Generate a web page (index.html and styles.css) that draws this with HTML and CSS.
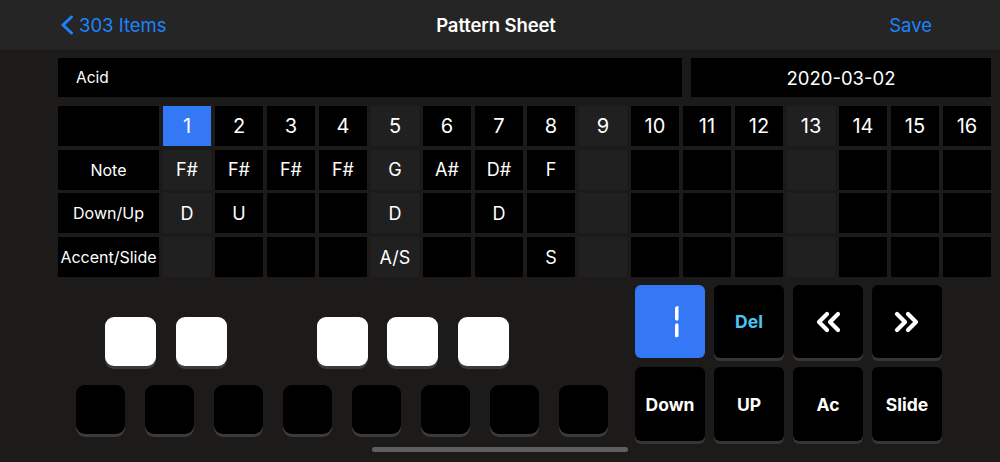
FILE: index.html
```html
<!DOCTYPE html>
<html>
<head>
<meta charset="utf-8">
<link rel="stylesheet" href="styles.css">
</head>
<body>
<header class="nav">
  <div class="nav-left">
    <svg class="chev" width="14" height="20" viewBox="0 0 14 20"><polyline points="11.5,2 3,10 11.5,18" fill="none" stroke="#1a84ff" stroke-width="3" stroke-linecap="round" stroke-linejoin="round"/></svg>
    <span class="back">303 Items</span>
  </div>
  <div class="nav-title">Pattern Sheet</div>
  <div class="nav-right"><span class="save">Save</span></div>
</header>
<main class="content">
  <div class="meta">
    <div class="name-box">Acid</div>
    <div class="date-box">2020-03-02</div>
  </div>
  <div class="grid">
    <div class="cell label"></div>
    <div class="cell num sel">1</div>
    <div class="cell num">2</div>
    <div class="cell num">3</div>
    <div class="cell num">4</div>
    <div class="cell num beat">5</div>
    <div class="cell num">6</div>
    <div class="cell num">7</div>
    <div class="cell num">8</div>
    <div class="cell num beat">9</div>
    <div class="cell num">10</div>
    <div class="cell num">11</div>
    <div class="cell num">12</div>
    <div class="cell num beat">13</div>
    <div class="cell num">14</div>
    <div class="cell num">15</div>
    <div class="cell num">16</div>

    <div class="cell label">Note</div>
    <div class="cell beat">F#</div>
    <div class="cell">F#</div>
    <div class="cell">F#</div>
    <div class="cell">F#</div>
    <div class="cell beat">G</div>
    <div class="cell">A#</div>
    <div class="cell">D#</div>
    <div class="cell">F</div>
    <div class="cell beat"></div>
    <div class="cell"></div>
    <div class="cell"></div>
    <div class="cell"></div>
    <div class="cell beat"></div>
    <div class="cell"></div>
    <div class="cell"></div>
    <div class="cell"></div>

    <div class="cell label">Down/Up</div>
    <div class="cell beat">D</div>
    <div class="cell">U</div>
    <div class="cell"></div>
    <div class="cell"></div>
    <div class="cell beat">D</div>
    <div class="cell"></div>
    <div class="cell">D</div>
    <div class="cell"></div>
    <div class="cell beat"></div>
    <div class="cell"></div>
    <div class="cell"></div>
    <div class="cell"></div>
    <div class="cell beat"></div>
    <div class="cell"></div>
    <div class="cell"></div>
    <div class="cell"></div>

    <div class="cell label">Accent/Slide</div>
    <div class="cell beat"></div>
    <div class="cell"></div>
    <div class="cell"></div>
    <div class="cell"></div>
    <div class="cell beat">A/S</div>
    <div class="cell"></div>
    <div class="cell"></div>
    <div class="cell">S</div>
    <div class="cell beat"></div>
    <div class="cell"></div>
    <div class="cell"></div>
    <div class="cell"></div>
    <div class="cell beat"></div>
    <div class="cell"></div>
    <div class="cell"></div>
    <div class="cell"></div>
  </div>

  <div class="bottom">
    <div class="keyboard">
      <div class="row-sharp">
        <div class="key white"></div>
        <div class="key white"></div>
        <div class="key gap"></div>
        <div class="key white"></div>
        <div class="key white"></div>
        <div class="key white"></div>
      </div>
      <div class="row-natural">
        <div class="key black"></div>
        <div class="key black"></div>
        <div class="key black"></div>
        <div class="key black"></div>
        <div class="key black"></div>
        <div class="key black"></div>
        <div class="key black"></div>
        <div class="key black"></div>
      </div>
    </div>
    <div class="pad">
      <div class="btn blue">
        <svg class="digit" width="8" height="32" viewBox="0 0 8 32"><polygon points="3,0.5 5.5,0 5.5,13.5 4,15 2,13.5 2,1.5" fill="#fff"/><polygon points="2,18.5 4,17 5.5,18.5 5.5,30.5 3,31.5 2,30.5" fill="#fff"/></svg>
      </div>
      <div class="btn del">Del</div>
      <div class="btn">
        <svg width="28" height="22" viewBox="0 0 28 22"><polyline points="13,3 5,11 13,19" fill="none" stroke="#fff" stroke-width="4.2" stroke-linejoin="round" stroke-linecap="round"/><polyline points="24,3 16,11 24,19" fill="none" stroke="#fff" stroke-width="4.2" stroke-linejoin="round" stroke-linecap="round"/></svg>
      </div>
      <div class="btn">
        <svg width="28" height="22" viewBox="0 0 28 22"><polyline points="4,3 12,11 4,19" fill="none" stroke="#fff" stroke-width="4.2" stroke-linejoin="round" stroke-linecap="round"/><polyline points="15,3 23,11 15,19" fill="none" stroke="#fff" stroke-width="4.2" stroke-linejoin="round" stroke-linecap="round"/></svg>
      </div>
      <div class="btn">Down</div>
      <div class="btn">UP</div>
      <div class="btn">Ac</div>
      <div class="btn">Slide</div>
    </div>
  </div>
</main>
<div class="home-indicator"></div>
</body>
</html>
```

FILE: styles.css
```css
* { box-sizing: border-box; }
html, body {
  margin: 0;
  padding: 0;
}
body {
  width: 1000px;
  height: 462px;
  overflow: hidden;
  background: #1c1b1a;
  color: #fff;
  font-family: Inter, "Liberation Sans", sans-serif;
  position: relative;
}
.nav {
  height: 50px;
  background: #252525;
  border-bottom: 1px solid #1f1f1f;
  display: grid;
  grid-template-columns: 1fr auto 1fr;
  align-items: center;
  padding: 0 68px 0 60px;
}
.nav-left {
  display: flex;
  align-items: center;
  gap: 5px;
  color: #1a84ff;
  font-size: 18.5px;
}
.chev { display: block; margin-top: 1px; }
.nav-title {
  font-size: 18.5px;
  font-weight: 600;
  letter-spacing: -0.1px;
}
.nav-right {
  display: flex;
  justify-content: flex-end;
  color: #1a84ff;
  font-size: 18.5px;
}
.content {
  padding: 8px 9px 0 58px;
}
.meta {
  display: flex;
  gap: 9px;
  height: 39px;
}
.name-box {
  width: 624px;
  background: #000;
  display: flex;
  align-items: center;
  padding-left: 18px;
  font-size: 15.5px;
}
.date-box {
  flex: 1;
  background: #000;
  display: flex;
  align-items: center;
  justify-content: center;
  font-size: 18.5px;
}
.grid {
  margin-top: 9px;
  display: grid;
  grid-template-columns: 101px repeat(16, 48px);
  grid-template-rows: repeat(4, 40px);
  column-gap: 4px;
  row-gap: 3.7px;
}
.cell {
  background: #000;
  display: flex;
  align-items: center;
  justify-content: center;
  font-size: 18px;
}
.cell.num { font-size: 20px; }
.cell.label { font-size: 16px; }
.cell.beat { background: #202020; }
.cell.sel { background: #3478f6; }
.bottom {
  margin-top: 8px;
  display: flex;
}
.keyboard {
  width: 577px;
  padding: 32px 0 0 18px;
}
.row-sharp {
  display: flex;
  gap: 19.5px;
  padding-left: 29px;
  height: 49px;
}
.row-natural {
  display: flex;
  gap: 20px;
  margin-top: 19px;
  height: 49px;
}
.key {
  border-radius: 9px;
}
.key.white {
  width: 51px;
  background: #fff;
  box-shadow: 0 3px 0 #3b3b3b;
}
.key.gap { width: 51px; }
.key.black {
  width: 49px;
  background: #000;
  box-shadow: 0 3px 0 #3b3b3b;
}
.pad {
  display: grid;
  grid-template-columns: repeat(4, 70px);
  grid-template-rows: 73px 74px;
  gap: 9px;
}
.btn {
  background: #000;
  border-radius: 6px;
  box-shadow: 0 3px 0 #353535;
  display: flex;
  align-items: center;
  justify-content: center;
  font-size: 17.5px;
  font-weight: 700;
}
.btn.blue {
  background: #3478f6;
  box-shadow: none;
}
.btn .digit { margin-left: 14px; }
.btn.del { color: #4cc4f4; }
.btn svg { display: block; }
.home-indicator {
  position: absolute;
  left: 372px;
  top: 447px;
  width: 256px;
  height: 5px;
  border-radius: 3px;
  background: #5e5e5e;
}
```
